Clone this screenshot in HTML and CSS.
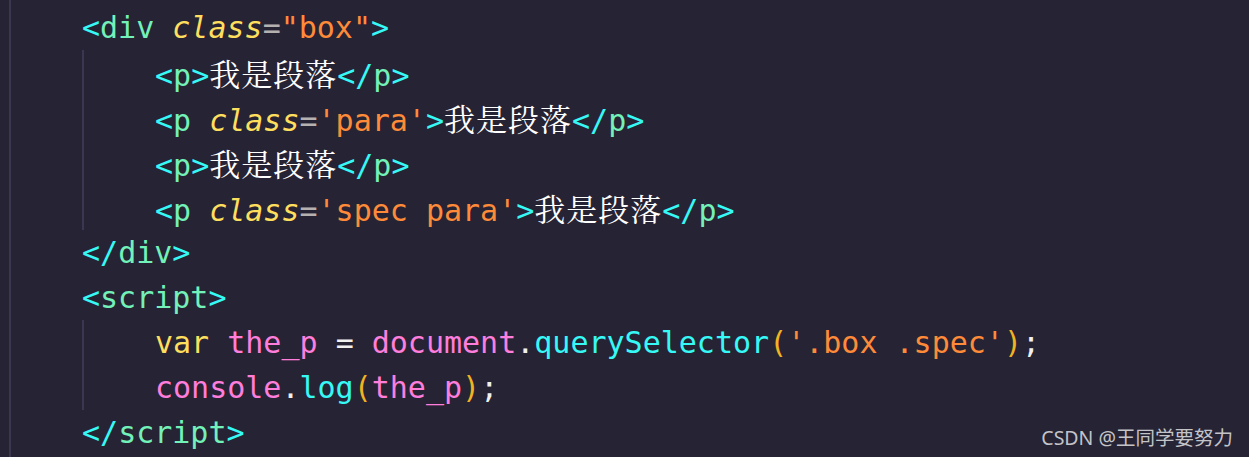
FILE: index.html
```html
<!DOCTYPE html>
<html lang="zh">
<head>
<meta charset="utf-8">
<title>code</title>
<link rel="stylesheet" href="styles.css">
</head>
<body>
<div class="editor">
  <div class="root">
    <div class="line"><span class="br">&lt;</span><span class="tg">div</span> <span class="at">class</span><span class="eq">=</span><span class="st">"box"</span><span class="br">&gt;</span></div>
    <div class="block">
      <div class="line"><span class="br">&lt;</span><span class="tg">p</span><span class="br">&gt;</span><span class="zh">我是段落</span><span class="br">&lt;/</span><span class="tg">p</span><span class="br">&gt;</span></div>
      <div class="line"><span class="br">&lt;</span><span class="tg">p</span> <span class="at">class</span><span class="eq">=</span><span class="st">'para'</span><span class="br">&gt;</span><span class="zh">我是段落</span><span class="br">&lt;/</span><span class="tg">p</span><span class="br">&gt;</span></div>
      <div class="line"><span class="br">&lt;</span><span class="tg">p</span><span class="br">&gt;</span><span class="zh">我是段落</span><span class="br">&lt;/</span><span class="tg">p</span><span class="br">&gt;</span></div>
      <div class="line"><span class="br">&lt;</span><span class="tg">p</span> <span class="at">class</span><span class="eq">=</span><span class="st">'spec para'</span><span class="br">&gt;</span><span class="zh">我是段落</span><span class="br">&lt;/</span><span class="tg">p</span><span class="br">&gt;</span></div>
    </div>
    <div class="line"><span class="br">&lt;/</span><span class="tg">div</span><span class="br">&gt;</span></div>
    <div class="line"><span class="br">&lt;</span><span class="tg">script</span><span class="br">&gt;</span></div>
    <div class="block">
      <div class="line"><span class="kw">var</span> <span class="id">the_p</span> <span class="op">=</span> <span class="id">document</span><span class="pt">.</span><span class="fn">querySelector</span><span class="pa">(</span><span class="st">'.box .spec'</span><span class="pa">)</span><span class="pt">;</span></div>
      <div class="line"><span class="id">console</span><span class="pt">.</span><span class="fn">log</span><span class="pa">(</span><span class="id">the_p</span><span class="pa">)</span><span class="pt">;</span></div>
    </div>
    <div class="line"><span class="br">&lt;/</span><span class="tg">script</span><span class="br">&gt;</span></div>
  </div>
  <div class="mark">CSDN @王同学要努力</div>
</div>
</body>
</html>
```
FILE: styles.css
```css
html, body {
  margin: 0;
  padding: 0;
  background: #262335;
}
.editor {
  position: relative;
  width: 1249px;
  height: 457px;
  background: #262335;
  overflow: hidden;
  font-family: "DejaVu Sans Mono", "Noto Sans CJK SC", monospace;
  font-size: 30px;
}
.root {
  margin-left: 9px;
  height: 457px;
  border-left: 2px solid #3a3850;
  padding-left: 71px;
  padding-top: 5px;
  box-sizing: border-box;
}
.block {
  border-left: 2px solid #3a3850;
  padding-left: 71px;
}
.line {
  height: 45px;
  line-height: 45px;
  white-space: pre;
  color: #ffffff;
}
.br { color: #36f9f6; }
.tg { color: #72f1b8; }
.at { color: #fede5d; font-style: italic; }
.eq { color: #b6b1b1; }
.st { color: #ff8b39; }
.kw { color: #fede5d; }
.id { color: #ff7edb; }
.op { color: #f0f0f0; }
.pt { color: #f0f0f0; }
.fn { color: #36f9f6; }
.pa { color: #f2b320; }
.zh {
  color: #ffffff;
  font-family: "Noto Serif CJK SC", "Noto Sans CJK SC", serif;
  font-size: 31px;
  letter-spacing: 1px;
}
.mark {
  position: absolute;
  right: 16px;
  bottom: 6px;
  font-family: "Noto Sans", "Noto Sans CJK SC", sans-serif;
  font-size: 19.5px;
  line-height: 26px;
  color: #c4c4c8;
}
```
